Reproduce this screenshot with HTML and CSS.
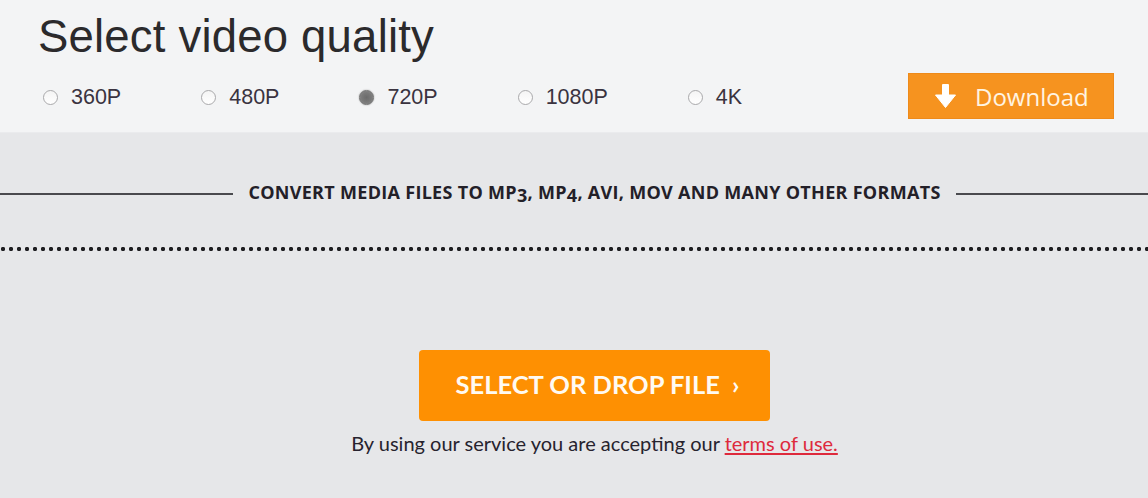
FILE: index.html
```html
<!DOCTYPE html>
<html lang="en">
<head>
<meta charset="utf-8">
<title>Select video quality</title>
<link rel="stylesheet" href="styles.css">
</head>
<body>
<div class="page">
  <section class="top">
    <h1 class="title">Select video quality</h1>
    <div class="quality-row">
      <div class="options">
        <label class="opt"><span class="radio"></span><span class="opt-label">360P</span></label>
        <label class="opt"><span class="radio"></span><span class="opt-label">480P</span></label>
        <label class="opt"><span class="radio checked"></span><span class="opt-label">720P</span></label>
        <label class="opt"><span class="radio"></span><span class="opt-label">1080P</span></label>
        <label class="opt"><span class="radio"></span><span class="opt-label">4K</span></label>
      </div>
      <button class="download">
        <svg class="dl-icon" width="21" height="24" viewBox="0 0 21 24" aria-hidden="true">
          <rect x="7" y="0" width="7" height="13" rx="1" fill="#fff"/>
          <path d="M0.5 11 H20.5 L10.5 23.5 Z" fill="#fff" stroke="#fff" stroke-width="1" stroke-linejoin="round"/>
        </svg>
        <span>Download</span>
      </button>
    </div>
  </section>
  <section class="main">
    <div class="convert">
      <span class="rule"></span>
      <h2 class="convert-text">CONVERT MEDIA FILES TO MP<span class="of">3</span>, MP<span class="of">4</span>, AVI, MOV AND MANY OTHER FORMATS</h2>
      <span class="rule"></span>
    </div>
    <div class="dots"></div>
    <div class="upload">
      <button class="select-btn">SELECT OR DROP FILE <span class="chev">›</span></button>
      <p class="terms">By using our service you are accepting our <a href="#" class="terms-link">terms of use.</a></p>
    </div>
  </section>
</div>
</body>
</html>
```
FILE: styles.css
```css
html, body {
  margin: 0;
  padding: 0;
  overflow: hidden;
  background: #e6e7e9;
}
.page {
  width: 1148px;
  height: 498px;
  overflow: hidden;
  background: #e6e7e9;
}
.top {
  height: 133px;
  box-sizing: border-box;
  background: #f3f4f5;
  border-bottom: 1px solid #eaebed;
  padding: 11px 34px 0 38px;
}
.title {
  margin: 0;
  font-family: "Liberation Sans", Arial, sans-serif;
  font-weight: 400;
  font-size: 45.5px;
  line-height: 52px;
  color: #2b2a2c;
  letter-spacing: 0.2px;
}
.quality-row {
  margin-top: 10px;
  height: 46px;
  display: flex;
  align-items: center;
  justify-content: space-between;
}
.options {
  display: flex;
  align-items: center;
  gap: 80px;
  padding-left: 5px;
  padding-top: 2px;
}
.opt {
  display: flex;
  align-items: center;
  gap: 13px;
  font-family: "Liberation Sans", Arial, sans-serif;
  font-size: 21.5px;
  color: #3a3340;
}
.radio {
  width: 15px;
  height: 15px;
  box-sizing: border-box;
  border-radius: 50%;
  border: 1px solid #a9a9ab;
  background: linear-gradient(#f4f4f4, #ffffff);
}
.radio.checked {
  border-color: #6e6e6e;
  background: radial-gradient(circle, #6b6b6b 0, #7a7a7a 55%, #9a9a9a 100%);
  box-shadow: 0 0 1.5px #888;
}
.download {
  width: 206px;
  height: 46px;
  border: 1px solid #ee8a1a;
  background: #f6931f;
  display: flex;
  align-items: center;
  gap: 19px;
  padding: 0 0 0 26px;
  font-family: "Open Sans", sans-serif;
  font-size: 24px;
  color: #fff4e2;
  cursor: pointer;
  box-sizing: border-box;
}
.dl-icon {
  display: block;
  flex: none;
}
.main {
  width: 1189px;
}
.convert {
  display: grid;
  grid-template-columns: 1fr auto 1fr;
  align-items: center;
  column-gap: 15px;
  padding-top: 50px;
}
.rule {
  height: 2px;
  background: #4a4a4e;
}
.convert-text {
  margin: 0;
  font-family: "Open Sans", sans-serif;
  font-weight: 700;
  font-size: 18px;
  line-height: 18px;
  letter-spacing: 0.3px;
  color: #232028;
}
.of {
  display: inline-block;
  vertical-align: -3px;
}
.dots {
  margin-top: 43px;
  height: 4px;
  background-image: radial-gradient(circle, #1f1f22 1.9px, transparent 2.4px);
  background-size: 8px 4px;
  background-position: -1px 0;
}
.upload {
  display: flex;
  flex-direction: column;
  align-items: center;
  padding-top: 99px;
}
.select-btn {
  width: 351px;
  height: 71px;
  border: none;
  border-radius: 4px;
  background: #fe9002;
  color: #fffaf2;
  font-family: "Lato", sans-serif;
  font-weight: 700;
  font-size: 25.5px;
  letter-spacing: 0;
  cursor: pointer;
  padding: 0 0 4px 6px;
}
.chev {
  margin-left: 6px;
}
.terms {
  margin: 10px 0 0;
  font-family: "Lato", sans-serif;
  font-size: 20px;
  line-height: 24px;
  color: #27232e;
}
.terms-link {
  color: #de2a3c;
  text-decoration: underline;
  text-underline-offset: 2px;
}
```
